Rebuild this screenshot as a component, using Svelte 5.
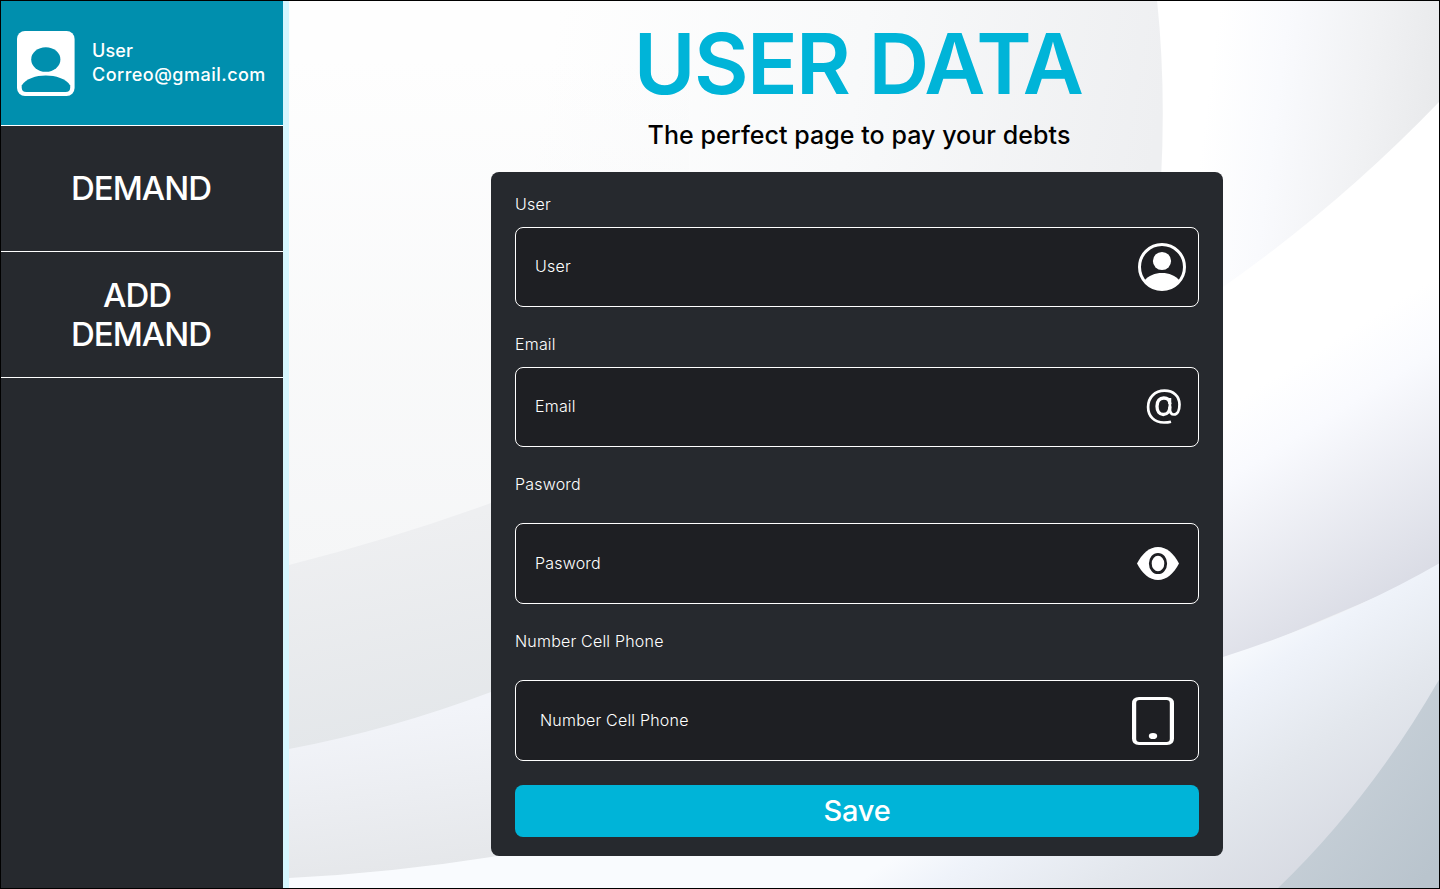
<script>
  const fields = [
    { label: 'User', icon: 'user' },
    { label: 'Email', icon: 'at' },
    { label: 'Pasword', icon: 'eye', tall: true },
    { label: 'Number Cell Phone', icon: 'phone', tall: true }
  ];
</script>

<div class="page">
  <aside>
    <div class="profile">
      <svg width="58" height="66" viewBox="0 0 58 66">
        <rect x="0" y="0" width="57.6" height="65" rx="8" fill="#fff" />
        <ellipse cx="28.8" cy="28.5" rx="14.6" ry="12.3" fill="#008fae" />
        <path d="M4.7 54.5C9 47.500 19 44.500 28.800 44.500S49 47.500 53.200 54.500V56.500Q53.200 61 48.500 61H9.400Q4.700 61 4.700 56.500Z" fill="#008fae" />
      </svg>
      <div class="who"><span class="name">User</span><span class="mail">Correo@gmail.com</span></div>
    </div>
    <nav>
      <a class="item"><span>DEMAND</span></a>
      <a class="item two"><span class="add">ADD</span><span>DEMAND</span></a>
    </nav>
  </aside>

  <main>
    <svg class="waves" viewBox="289 1 1150 887" preserveAspectRatio="none">
      <defs>
        <linearGradient id="g0" gradientUnits="userSpaceOnUse" x1="560" y1="0" x2="1163" y2="100">
          <stop offset="0" stop-color="#fefefe" /><stop offset=".5" stop-color="#f8f9fa" /><stop offset="1" stop-color="#eeeff1" />
        </linearGradient>
        <linearGradient id="g0b" x1="0" y1="0" x2="0" y2="1">
          <stop offset="0" stop-color="#f5f6f7" stop-opacity="0" /><stop offset="1" stop-color="#f5f6f7" />
        </linearGradient>
        <linearGradient id="g1" gradientUnits="userSpaceOnUse" x1="390" y1="530" x2="430" y2="725">
          <stop offset="0" stop-color="#eeeff1" /><stop offset="1" stop-color="#e4e7ea" />
        </linearGradient>
        <linearGradient id="g2" gradientUnits="userSpaceOnUse" x1="400" y1="715" x2="420" y2="870">
          <stop offset="0" stop-color="#f2f4f9" /><stop offset="1" stop-color="#e5e7ea" />
        </linearGradient>
        <linearGradient id="g4" gradientUnits="userSpaceOnUse" x1="1210" y1="80" x2="1440" y2="110">
          <stop offset="0" stop-color="#ffffff" /><stop offset=".3" stop-color="#f9fafd" /><stop offset=".7" stop-color="#f0f1f3" /><stop offset="1" stop-color="#e8e9eb" />
        </linearGradient>
        <linearGradient id="g5" gradientUnits="userSpaceOnUse" x1="1270" y1="380" x2="1400" y2="590">
          <stop offset="0" stop-color="#ffffff" /><stop offset=".25" stop-color="#f9fafe" /><stop offset="1" stop-color="#dadce5" />
        </linearGradient>
        <linearGradient id="g6" gradientUnits="userSpaceOnUse" x1="1217" y1="650" x2="1348" y2="853">
          <stop offset="0" stop-color="#f9fbfe" /><stop offset=".18" stop-color="#eff3fa" /><stop offset=".55" stop-color="#e3e7ed" /><stop offset="1" stop-color="#d7dae2" />
        </linearGradient>
        <linearGradient id="g7" gradientUnits="userSpaceOnUse" x1="1340" y1="780" x2="1440" y2="860">
          <stop offset="0" stop-color="#c6cfd7" /><stop offset="1" stop-color="#b9c4cd" />
        </linearGradient>
      </defs>
      <rect x="289" y="0" width="1151" height="889" fill="url(#g0)" />
      <rect x="289" y="60" width="400" height="510" fill="url(#g0b)" />
      <path d="M289 565Q395 538 491 503L700 400V900H289Z" fill="url(#g1)" />
      <path d="M289 749Q390 730 491 692L700 600V900H289Z" fill="url(#g2)" />
      <path d="M1157 0Q1166 85 1161 180L1180 320H1240L1440 102V0Z" fill="url(#g4)" />
      <path d="M1440 101Q1340 205 1223 287L1180 310V680L1440 570Z" fill="url(#g5)" />
      <path d="M1440 563Q1345 618 1223 657L900 780L491 857Q390 873 289 878V900H1440Z" fill="url(#g6)" />
      <path d="M1440 678Q1370 800 1277 889H1440Z" fill="url(#g7)" />
    </svg>

    <h1>USER DATA</h1>
    <p class="lead">The perfect page to pay your debts</p>

    <form>
      {#each fields as f}
        <div class="field" class:tall={f.tall}>
          <span class="label">{f.label}</span>
          <div class="box {f.icon}">
            <span class="hint">{f.label}</span>
            {#if f.icon === 'user'}
              <svg width="48" height="48" viewBox="0 0 48 48">
                <circle cx="24" cy="24" r="22.500" fill="none" stroke="#fff" stroke-width="3" />
                <circle cx="24" cy="18" r="9.100" fill="#fff" />
                <path d="M6.500 37.500C10.500 32.500 17 30 24 30S37.500 32.500 41.500 37.500A23 23 0 0 1 6.500 37.500Z" fill="#fff" />
              </svg>
            {:else if f.icon === 'at'}
              <svg width="36" height="36" viewBox="0 0 36 36" fill="none" stroke="#fff" stroke-width="2.700">
                <path d="M25 32.700Q22 33.500 18 33.500C8 33.500 2.100 27 2.100 18C2.100 8.200 9 1.700 18.500 1.700C27.500 1.700 33.500 7 33.500 15.500C33.500 21.500 31.300 25.500 28 25.500C25 25.500 23.900 23.300 23.900 20V9" />
                <path d="M23.900 15C23.900 10.500 21.300 9 17.800 9C13.600 9 11 12 11 17.200C11 22.300 13.400 25.500 17.300 25.500C21.300 25.500 23.900 22.300 23.900 17.500" stroke-width="3.300" />
              </svg>
            {:else if f.icon === 'eye'}
              <svg width="42" height="33" viewBox="0 0 42 33">
                <path d="M0 16.500C5 6.500 12.500 0 21 0S37 6.500 42 16.500C37 26.500 29.500 33 21 33S5 26.500 0 16.500Z" fill="#fff" />
                <ellipse cx="21" cy="16.500" rx="7.700" ry="9.200" fill="#fff" stroke="#1e1f23" stroke-width="2.800" />
              </svg>
            {:else}
              <svg width="42" height="48" viewBox="0 0 42 48">
                <path fill="#fff" fill-rule="evenodd" d="M7 0H35Q42 0 42 6.500V41.500Q42 48 35 48H7Q0 48 0 41.500V6.500Q0 0 7 0ZM7.500 3Q4.200 3 4.200 6V42Q4.200 45 7.500 45H34.500Q37.800 45 37.800 42V6Q37.800 3 34.500 3Z" />
                <ellipse cx="21" cy="39" rx="4.200" ry="3.100" fill="#fff" />
              </svg>
            {/if}
          </div>
        </div>
      {/each}
      <button type="button">Save</button>
    </form>
  </main>
</div>

<style>
  :global(body) { margin: 0; }
  .page {
    box-sizing: border-box;
    width: 1440px;
    height: 889px;
    border: 1px solid #000;
    display: flex;
    overflow: hidden;
    font-family: Inter, "Open Sans", sans-serif;
    color: #fff;
  }
  aside {
    width: 282px;
    flex: none;
    background: #26292e;
    border-right: 6px solid #d6f7ff;
  }
  .profile {
    box-sizing: border-box;
    height: 125px;
    background: #008fae;
    border-bottom: 1px solid #fff;
    display: flex;
    align-items: center;
    gap: 17px;
    padding: 2px 0 0 16px;
  }
  .who {
    display: flex;
    flex-direction: column;
    margin-bottom: 2px;
    font-weight: 450;
    font-size: 18px;
    line-height: 24px;
  }
  .name { letter-spacing: 0.1px; }
  .mail { letter-spacing: 0.48px; }
  .item {
    box-sizing: border-box;
    height: 126px;
    border-bottom: 1px solid #fff;
    display: flex;
    flex-direction: column;
    align-items: center;
    justify-content: center;
    padding-right: 2px;
    font-weight: 450;
    font-size: 33px;
    line-height: 39px;
    letter-spacing: -1px;
  }
  .add { margin-right: 8px; }
  main {
    position: relative;
    flex: 1;
    display: flex;
    flex-direction: column;
    align-items: center;
  }
  .waves { position: absolute; inset: 0; width: 100%; height: 100%; }
  h1, .lead, form { position: relative; }
  h1 {
    margin: 10px 0 0 -12px;
    font-size: 84px;
    line-height: 105px;
    font-weight: 600;
    letter-spacing: -1.7px;
    color: #00b4d8;
    white-space: nowrap;
  }
  .lead {
    margin: 3px 0 0 -10px;
    font-size: 25px;
    line-height: 32px;
    font-weight: 450;
    letter-spacing: 0.05px;
    color: #000;
    white-space: nowrap;
  }
  form {
    box-sizing: border-box;
    width: 732px;
    height: 684px;
    margin: 21px 0 0 -14px;
    padding: 20px 24px 19px;
    border-radius: 8px;
    background: #26292e;
    display: flex;
    flex-direction: column;
  }
  .field { height: 140px; display: flex; flex-direction: column; }
  .field.tall { height: 157px; }
  .label, .hint { font-size: 16px; font-weight: 350; letter-spacing: 0.2px; }
  .label { height: 35px; line-height: 25px; }
  .tall .label { height: 51px; }
  .hint { margin-bottom: 2px; }
  .box {
    box-sizing: border-box;
    height: 80px;
    border: 1px solid #fff;
    border-radius: 8px;
    background: #1e1f23;
    display: flex;
    align-items: center;
    justify-content: space-between;
    padding: 0 12px 0 19px;
  }
  .tall .box { height: 81px; }
  .box.at { padding-right: 16px; }
  .box.eye { padding-right: 19px; }
  .box.phone { padding: 0 24px; }
  button {
    height: 52px;
    margin-top: -1px;
    flex: none;
    border: 0;
    border-radius: 8px;
    background: #00b4d8;
    color: #fff;
    font: 500 29px/52px Inter, "Open Sans", sans-serif;
    letter-spacing: -0.2px;
    padding: 0;
  }
</style>
